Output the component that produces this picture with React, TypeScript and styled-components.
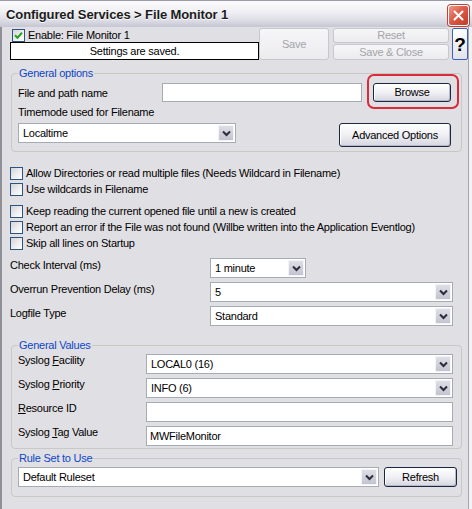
import React from "react";
import styled, { createGlobalStyle } from "styled-components";

const Global = createGlobalStyle`
  html, body { margin: 0; padding: 0; background: #f2f2f4; }
  body {
    font-family: "Liberation Sans", Arial, sans-serif;
    font-size: 11px;
    line-height: 13px;
    letter-spacing: -0.25px;
    color: #000;
  }
  #root { width: 472px; height: 509px; }
`;

const Window = styled.div`
  width: 472px;
  height: 509px;
  display: flex;
  flex-direction: column;
  background: #f2f2f4;
  overflow: hidden;
`;

const TitleBar = styled.div`
  height: 27px;
  flex: none;
  box-sizing: border-box;
  display: flex;
  align-items: center;
  justify-content: space-between;
  padding: 0 3px 0 6px;
  border-top: 1px solid #9c9ca8;
  background: linear-gradient(#fbfbfd 0%, #f1f1f5 40%, #dadae3 78%, #c6c6d4 100%);
`;

const Title = styled.div`
  font-weight: bold;
  font-size: 13px;
  color: #1c1c1c;
  text-shadow: 0 1px 0 #fff;
  letter-spacing: -0.1px;
`;

const CloseBtn = styled.div`
  width: 21px;
  height: 21px;
  box-sizing: border-box;
  margin-top: 2px;
  border: 1px solid #fff;
  border-radius: 3px;
  background: linear-gradient(135deg, #f09a8a 0%, #dc5b48 45%, #c23a2a 100%);
  display: flex;
  align-items: center;
  justify-content: center;
  box-shadow: 0 0 0 1px #b3453a;
`;

const Body = styled.div`
  flex: 1;
  width: 469px;
  box-sizing: border-box;
  border-left: 2px solid #8f8f98;
  border-right: 1px solid #a6a6ae;
  background: #e0dfe3;
  padding: 1px 0 0 8px;
  display: flex;
  flex-direction: column;
`;

const TopRow = styled.div`
  display: flex;
  align-items: flex-start;
`;

const StatusCol = styled.div`
  width: 249px;
  display: flex;
  flex-direction: column;
`;

const CheckRow = styled.label<{ $h?: number; $pl?: number }>`
  display: flex;
  align-items: center;
  gap: 3px;
  height: ${(p) => p.$h ?? 16}px;
  padding-left: ${(p) => p.$pl ?? 0}px;
  white-space: nowrap;
`;

const Box = styled.span`
  width: 13px;
  height: 13px;
  box-sizing: border-box;
  flex: none;
  border: 1px solid #2a5580;
  background: linear-gradient(135deg, #d4d4d8 0%, #eeeef0 55%, #ffffff 100%);
  display: flex;
  align-items: center;
  justify-content: center;
`;

const StatusBox = styled.div`
  height: 18px;
  box-sizing: border-box;
  border: 1px solid #000;
  background: #fff;
  text-align: center;
  line-height: 16px;
`;

const DisabledBtn = styled.div<{ $w: number; $h: number }>`
  width: ${(p) => p.$w}px;
  height: ${(p) => p.$h}px;
  box-sizing: border-box;
  border: 1px solid #c8c8cc;
  border-radius: 3px;
  background: linear-gradient(#f6f6f8, #ececee);
  color: #a4a4a8;
  display: flex;
  align-items: center;
  justify-content: center;
`;

const BtnStack = styled.div`
  display: flex;
  flex-direction: column;
  gap: 1px;
  margin-left: 4px;
`;

const HelpBtn = styled.div`
  width: 16px;
  height: 32px;
  box-sizing: border-box;
  margin-left: 3px;
  border: 1px solid #3c62c0;
  border-radius: 2px;
  background: linear-gradient(#ffffff, #e2e2ea);
  font-weight: bold;
  font-size: 19px;
  display: flex;
  align-items: center;
  justify-content: center;
`;

const Group = styled.fieldset<{ $mt: number; $pr: number; $pt: number; $pb: number }>`
  margin: ${(p) => p.$mt}px 0 0 1px;
  width: 451px;
  box-sizing: border-box;
  border: 1px solid #c8c8c4;
  border-radius: 4px;
  padding: ${(p) => p.$pt}px ${(p) => p.$pr}px ${(p) => p.$pb}px 6px;
  min-width: 0;
`;

const Legend = styled.legend`
  padding: 0 1px;
  color: #0d46c8;
  line-height: 13px;
`;

const Row = styled.div<{ $mt?: number }>`
  display: flex;
  align-items: flex-start;
  justify-content: space-between;
  margin-top: ${(p) => p.$mt ?? 0}px;
`;

const Left = styled.div`
  display: flex;
  align-items: flex-start;
`;

const Label = styled.div<{ $w?: number; $dy?: number }>`
  width: ${(p) => (p.$w ? `${p.$w}px` : "auto")};
  flex: none;
  padding-top: ${(p) => p.$dy ?? 1}px;
  white-space: nowrap;
`;

const Input = styled.div<{ $w: number; $h?: number }>`
  width: ${(p) => p.$w}px;
  height: ${(p) => p.$h ?? 20}px;
  box-sizing: border-box;
  border: 1px solid #a5acb5;
  background: #fff;
  padding-left: 3px;
  line-height: ${(p) => (p.$h ?? 20) - 2}px;
`;

const SelectBox = styled.div<{ $w: number }>`
  width: ${(p) => p.$w}px;
  height: 20px;
  box-sizing: border-box;
  border: 1px solid #a5acb5;
  background: #fff;
  display: flex;
  align-items: stretch;
  padding: 1px;
`;

const SelectText = styled.div`
  flex: 1;
  padding-left: 3px;
  line-height: 17px;
`;

const Arrow = styled.div`
  width: 16px;
  box-sizing: border-box;
  border: 1px solid #f4f4f8;
  background: linear-gradient(#dedee6, #c2c4d0);
  display: flex;
  align-items: center;
  justify-content: center;
`;

const Button = styled.div<{ $w: number; $h: number; $ml?: number }>`
  width: ${(p) => p.$w}px;
  height: ${(p) => p.$h}px;
  margin-left: ${(p) => p.$ml ?? 0}px;
  flex: none;
  box-sizing: border-box;
  border: 1px solid #1a2740;
  border-radius: 3px;
  background: linear-gradient(#ffffff 0%, #f2f2f6 45%, #d6d6e0 100%);
  box-shadow: inset -1px -1px 0 #b9b9c8, inset 1px 1px 0 #ffffff;
  display: flex;
  align-items: center;
  justify-content: center;
  position: relative;
`;

const Highlighted = styled(Button)`
  &::after {
    content: "";
    position: absolute;
    top: -10px;
    bottom: -8px;
    left: -7px;
    right: -9px;
    border: 2px solid #dc2a3a;
    border-radius: 7px;
  }
`;

const CheckList = styled.div<{ $mt: number }>`
  display: flex;
  flex-direction: column;
  margin-top: ${(p) => p.$mt}px;
`;

const FormRows = styled.div<{ $mt?: number }>`
  display: flex;
  flex-direction: column;
  gap: 4px;
  margin-top: ${(p) => p.$mt ?? 0}px;
`;

const U = styled.span`
  text-decoration: underline;
  text-underline-offset: 1px;
`;

const Chevron = () => (
  <svg width="9" height="7" viewBox="0 0 9 7">
    <path d="M1 1.5 L4.5 5 L8 1.5" fill="none" stroke="#2b2b3a" strokeWidth="2" />
  </svg>
);

const Tick = () => (
  <svg width="9" height="9" viewBox="0 0 9 9">
    <path d="M1 4.2 L3.5 6.7 L8 1.6" fill="none" stroke="#21a121" strokeWidth="2" />
  </svg>
);

const Select = ({ w, value }: { w: number; value: string }) => (
  <SelectBox $w={w}>
    <SelectText>{value}</SelectText>
    <Arrow>
      <Chevron />
    </Arrow>
  </SelectBox>
);

const Check = ({ checked, children, pl, h }: { checked?: boolean; children: React.ReactNode; pl?: number; h?: number }) => (
  <CheckRow $pl={pl} $h={h}>
    <Box>{checked && <Tick />}</Box>
    <span>{children}</span>
  </CheckRow>
);

export default function App() {
  return (
    <>
      <Global />
      <Window>
        <TitleBar>
          <Title>Configured Services &gt; File Monitor 1</Title>
          <CloseBtn>
            <svg width="11" height="11" viewBox="0 0 11 11">
              <path d="M1.5 1.5 L9.5 9.5 M9.5 1.5 L1.5 9.5" stroke="#fff" strokeWidth="2" strokeLinecap="round" />
            </svg>
          </CloseBtn>
        </TitleBar>
        <Body>
          <TopRow>
            <StatusCol>
              <Check checked h={14} pl={2}>Enable: File Monitor 1</Check>
              <StatusBox>Settings are saved.</StatusBox>
            </StatusCol>
            <DisabledBtn $w={70} $h={32}>Save</DisabledBtn>
            <BtnStack>
              <DisabledBtn $w={116} $h={15}>Reset</DisabledBtn>
              <DisabledBtn $w={116} $h={16}>Save &amp; Close</DisabledBtn>
            </BtnStack>
            <HelpBtn>?</HelpBtn>
          </TopRow>

          <Group $mt={7} $pt={3} $pr={10} $pb={4}>
            <Legend>General options</Legend>
            <Row>
              <Left>
                <Label $w={144} $dy={4}>File and path name</Label>
                <Input $w={200} $h={19} />
              </Left>
              <Highlighted $w={78} $h={19} $ml={9}>Browse</Highlighted>
            </Row>
            <Row $mt={4}>
              <Label $dy={0}>Timemode used for Filename</Label>
            </Row>
            <Row $mt={4}>
              <Select w={218} value="Localtime" />
              <Button $w={112} $h={24}>Advanced Options</Button>
            </Row>
          </Group>

          <CheckList $mt={13}>
            <Check>Allow Directories or read multiple files (Needs Wildcard in Filename)</Check>
            <Check>Use wildcards in Filename</Check>
          </CheckList>
          <CheckList $mt={6}>
            <Check>Keep reading the current opened file until a new is created</Check>
            <Check>Report an error if the File was not found (Willbe written into the Application Eventlog)</Check>
            <Check>Skip all lines on Startup</Check>
          </CheckList>

          <FormRows $mt={7}>
            <Left>
              <Label $w={200}>Check Interval (ms)</Label>
              <Select w={96} value="1 minute" />
            </Left>
            <Left>
              <Label $w={200}>Overrun Prevention Delay (ms)</Label>
              <Select w={243} value="5" />
            </Left>
            <Left>
              <Label $w={200}>Logfile Type</Label>
              <Select w={243} value="Standard" />
            </Left>
          </FormRows>

          <Group $mt={13} $pt={2} $pr={8} $pb={2}>
            <Legend>General Values</Legend>
            <FormRows>
              <Left>
                <Label $w={128} $dy={0}>Syslog <U>F</U>acility</Label>
                <Select w={307} value="LOCAL0 (16)" />
              </Left>
              <Left>
                <Label $w={128} $dy={0}>Syslog <U>P</U>riority</Label>
                <Select w={307} value="INFO (6)" />
              </Left>
              <Left>
                <Label $w={128} $dy={0}><U>R</U>esource ID</Label>
                <Input $w={307} />
              </Left>
              <Left>
                <Label $w={128} $dy={0}>Syslog <U>T</U>ag Value</Label>
                <Input $w={307}>MWFileMonitor</Input>
              </Left>
            </FormRows>
          </Group>

          <Group $mt={3} $pt={2} $pr={4} $pb={9}>
            <Legend>Rule Set to Use</Legend>
            <Row>
              <Select w={361} value="Default Ruleset" />
              <Button $w={73} $h={20}>Refresh</Button>
            </Row>
          </Group>
        </Body>
      </Window>
    </>
  );
}
